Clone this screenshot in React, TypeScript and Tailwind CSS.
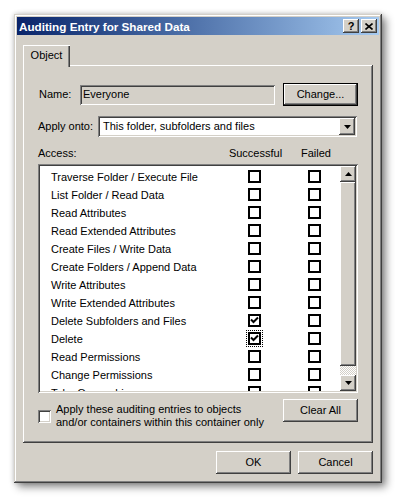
import React from "react";

const raised =
  "shadow-[inset_-1px_-1px_0_#404040,inset_1px_1px_0_#ffffff,inset_-2px_-2px_0_#808080,inset_2px_2px_0_#d4d0c8]";
const sunken =
  "shadow-[inset_1px_1px_0_#808080,inset_-1px_-1px_0_#ffffff,inset_2px_2px_0_#404040,inset_-2px_-2px_0_#d4d0c8]";

const rows = [
  "Traverse Folder / Execute File",
  "List Folder / Read Data",
  "Read Attributes",
  "Read Extended Attributes",
  "Create Files / Write Data",
  "Create Folders / Append Data",
  "Write Attributes",
  "Write Extended Attributes",
  "Delete Subfolders and Files",
  "Delete",
  "Read Permissions",
  "Change Permissions",
  "Take Ownership",
];

function Check() {
  return (
    <svg width="9" height="9" viewBox="0 0 9 9" className="block">
      <path d="M1 3.5 L3.5 6 L8 1.5" stroke="#000" strokeWidth="2" fill="none" />
    </svg>
  );
}

function ListBox({ checked, focus }: { checked?: boolean; focus?: boolean }) {
  return (
    <div
      className={
        "flex h-[13px] w-[13px] items-center justify-center border-2 border-black bg-white " +
        (focus ? "outline-1 outline-offset-[1px] outline-dotted outline-black" : "")
      }
    >
      {checked ? <Check /> : null}
    </div>
  );
}

function Arrow({ dir }: { dir: "up" | "down" }) {
  return (
    <svg width="7" height="4" viewBox="0 0 7 4" className="block">
      {dir === "up" ? (
        <path d="M3.5 0 L7 4 L0 4 Z" fill="#000" />
      ) : (
        <path d="M0 0 L7 0 L3.5 4 Z" fill="#000" />
      )}
    </svg>
  );
}

export default function App() {
  return (
    <div className="min-h-[498px] w-[395px] bg-white pl-[14px] pt-[14px] font-['Liberation_Sans',Arial,sans-serif] text-[11px] leading-[13px] text-black">
      <div className="flex h-[469px] w-[368px] flex-col bg-[#d4d0c8] p-[3px] shadow-[inset_-1px_-1px_0_#404040,inset_1px_1px_0_#d4d0c8,inset_-2px_-2px_0_#808080,inset_2px_2px_0_#ffffff,4px_4px_8px_rgba(0,0,0,0.45),0_0_5px_rgba(0,0,0,0.2)]">
        {/* Title bar */}
        <div className="flex h-[18px] items-center justify-between bg-gradient-to-r from-[#0a246a] to-[#a6caf0] pl-[2px] pr-[2px]">
          <span className="text-[11.7px] font-bold text-white">Auditing Entry for Shared Data</span>
          <div className="flex">
            <div className={"flex h-[14px] w-[16px] items-center justify-center bg-[#d4d0c8] text-[11px] font-bold leading-none " + raised}>
              ?
            </div>
            <div className={"ml-[2px] flex h-[14px] w-[16px] items-center justify-center bg-[#d4d0c8] " + raised}>
              <svg width="8" height="7" viewBox="0 0 8 7" className="block">
                <path d="M0.5 0.5 L7.5 6.5 M7.5 0.5 L0.5 6.5" stroke="#000" strokeWidth="1.6" />
              </svg>
            </div>
          </div>
        </div>

        {/* Body */}
        <div className="flex flex-col px-[6px] pt-[10px]">
          <div className="flex h-[20px]">
            <div className="relative z-10 flex h-[22px] w-[47px] items-start justify-center bg-[#d4d0c8] pt-[4px] shadow-[inset_1px_1px_0_#ffffff,inset_-1px_0_0_#404040,inset_-2px_0_0_#808080]">
              Object
            </div>
          </div>

          <div className="flex h-[378px] flex-col px-[15px] pt-[18px] shadow-[inset_-1px_-1px_0_#404040,inset_1px_1px_0_#ffffff,inset_-2px_-2px_0_#808080]">
            {/* Name row */}
            <div className="flex h-[23px] items-center">
              <span className="w-[42px] pl-[1px]">Name:</span>
              <div className={"flex h-[20px] w-[195px] items-center pl-[3px] " + sunken}>Everyone</div>
              <div className="ml-auto flex h-[23px] w-[75px] items-center justify-center bg-[#d4d0c8] shadow-[inset_0_0_0_1px_#000000,inset_-2px_-2px_0_#404040,inset_2px_2px_0_#ffffff,inset_-3px_-3px_0_#808080]">
                Change...
              </div>
            </div>

            {/* Apply onto row */}
            <div className="mt-[10px] flex h-[21px] items-center">
              <span className="w-[60px]">Apply onto:</span>
              <div className={"flex h-[21px] w-[259px] items-center bg-white p-[2px] " + sunken}>
                <span className="flex-1 pl-[3px]">This folder, subfolders and files</span>
                <div className={"flex h-[17px] w-[16px] items-center justify-center bg-[#d4d0c8] " + raised}>
                  <Arrow dir="down" />
                </div>
              </div>
            </div>

            {/* Header */}
            <div className="mt-[9px] flex h-[14px] items-center">
              <span className="w-[187px]">Access:</span>
              <span className="w-[61px] text-center">Successful</span>
              <span className="w-[10px]" />
              <span className="w-[40px] text-center">Failed</span>
            </div>

            {/* List */}
            <div className={"mt-[4px] flex h-[229px] w-[320px] shrink-0 bg-white p-[2px] " + sunken}>
              <div className="w-[300px] overflow-hidden pt-[1px]">
                {rows.map((r, i) => (
                  <div key={r} className="flex h-[18px] items-center pl-[11px]">
                    <span className="w-[197px] whitespace-nowrap pt-[2px]">{r}</span>
                    <ListBox checked={i === 8 || i === 9} focus={i === 9} />
                    <span className="w-[47px]" />
                    <ListBox />
                  </div>
                ))}
              </div>
              <div className="flex w-[16px] flex-col bg-[#d4d0c8]">
                <div className={"flex h-[16px] items-center justify-center " + raised}>
                  <Arrow dir="up" />
                </div>
                <div className={"h-[184px] " + raised} />
                <div className="flex-1 bg-[repeating-conic-gradient(#ffffff_0_25%,#d4d0c8_0_50%)] bg-[length:2px_2px]" />
                <div className={"flex h-[16px] items-center justify-center " + raised}>
                  <Arrow dir="down" />
                </div>
              </div>
            </div>

            {/* Bottom row */}
            <div className="mt-[6px] flex items-start justify-between">
              <div className="mt-[4px] flex items-center gap-[5px]">
                <div className={"h-[13px] w-[13px] bg-white " + sunken} />
                <div className="leading-[13px]">
                  <div>Apply these auditing entries to objects</div>
                  <div>and/or containers within this container only</div>
                </div>
              </div>
              <div className={"flex h-[23px] w-[75px] items-center justify-center " + raised}>Clear All</div>
            </div>
          </div>

          {/* Dialog buttons */}
          <div className="mt-[8px] flex justify-end gap-[7px]">
            <div className={"flex h-[23px] w-[75px] items-center justify-center " + raised}>OK</div>
            <div className={"flex h-[23px] w-[75px] items-center justify-center " + raised}>Cancel</div>
          </div>
        </div>
      </div>
    </div>
  );
}
